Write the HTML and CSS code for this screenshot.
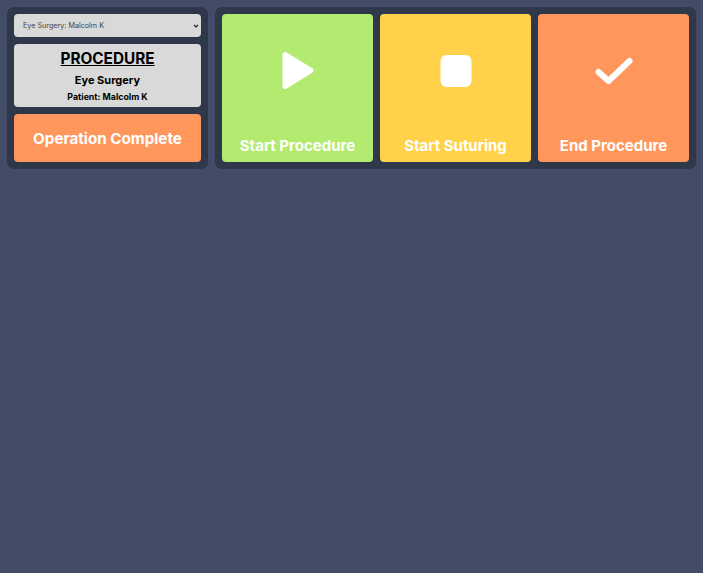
FILE: index.html
```html
<!DOCTYPE html>
<html lang="en">
<head>
    <meta charset="UTF-8">
    <title>Procedure</title>
    <link rel="stylesheet" href="styles.css">
</head>
<body>
    <div class="layout">
        <div class="panel side">
            <select class="picker">
                <option>Eye Surgery: Malcolm K</option>
            </select>
            <div class="info">
                <h1>PROCEDURE</h1>
                <h2>Eye Surgery</h2>
                <p>Patient: Malcolm K</p>
            </div>
            <button class="status">Operation Complete</button>
        </div>
        <div class="panel actions">
            <button class="action green">
                <svg class="icon" viewBox="0 0 48 48"><path d="M11 7.500 L37 23.500 L11 39.500 Z" fill="#fff" stroke="#fff" stroke-width="5" stroke-linejoin="round"/></svg>
                <span>Start Procedure</span>
            </button>
            <button class="action yellow">
                <svg class="icon" viewBox="0 0 48 48"><rect x="8.500" y="8" width="31" height="32" rx="6" fill="#fff"/></svg>
                <span>Start Suturing</span>
            </button>
            <button class="action orange">
                <svg class="icon" viewBox="0 0 48 48"><path d="M8.500 25 L18.500 34 L39.500 14" fill="none" stroke="#fff" stroke-width="6" stroke-linecap="round" stroke-linejoin="round"/></svg>
                <span>End Procedure</span>
            </button>
        </div>
    </div>
</body>
</html>
```

FILE: styles.css
```css
body {
    margin: 0;
    min-height: 573px;
    background-color: #434c66;
    font-family: "Inter", "Liberation Sans", sans-serif;
}
.layout {
    display: flex;
    align-items: flex-start;
    gap: 7px;
    padding: 7px;
}
.panel {
    box-sizing: border-box;
    height: 162px;
    padding: 7px;
    background-color: #2f374b;
    border-radius: 7px;
}
.side {
    width: 201px;
    display: flex;
    flex-direction: column;
    gap: 7px;
}
.picker {
    height: 23px;
    padding: 0 9px;
    appearance: none;
    background-color: #d9d9d9;
    background-image: url("data:image/svg+xml,%3Csvg xmlns='http://www.w3.org/2000/svg' width='6' height='4'%3E%3Cpath d='M1 1l2 2 2-2' fill='none' stroke='%23222' stroke-width='1.200'/%3E%3C/svg%3E");
    background-repeat: no-repeat;
    background-position: right 2px center;
    color: #444;
    font-family: inherit;
    font-size: 7.200px;
    border: none;
    border-radius: 4px;
}
.info {
    height: 63px;
    box-sizing: border-box;
    padding-top: 6px;
    background-color: #d9d9d9;
    border-radius: 4px;
    color: #000;
    text-align: center;
}
.info h1 {
    margin: 0;
    font-size: 15.300px;
    line-height: 18px;
    font-weight: 700;
    text-decoration: underline;
}
.info h2 {
    margin: 5px 0 0;
    font-size: 11px;
    line-height: 14px;
    font-weight: 700;
}
.info p {
    margin: 4px 0 0;
    font-size: 8.800px;
    line-height: 11px;
    font-weight: 700;
}
.status {
    height: 48px;
    padding: 0;
    background-color: #ff975d;
    border: none;
    border-radius: 4px;
    color: #fff;
    font-family: inherit;
    font-size: 15.200px;
    font-weight: 700;
}
.actions {
    width: 481px;
    display: flex;
    gap: 7px;
}
.action {
    width: 151px;
    height: 148px;
    padding: 0 0 7px;
    display: flex;
    flex-direction: column;
    align-items: center;
    justify-content: space-between;
    border: none;
    border-radius: 4px;
    color: #fff;
    font-family: inherit;
    font-size: 15px;
    font-weight: 700;
}
.action span {
    line-height: 18px;
}
.icon {
    width: 48px;
    height: 48px;
    margin-top: 33px;
}
.green {
    background-color: #b2eb70;
}
.yellow {
    background-color: #ffd249;
}
.orange {
    background-color: #ff975d;
}
```
